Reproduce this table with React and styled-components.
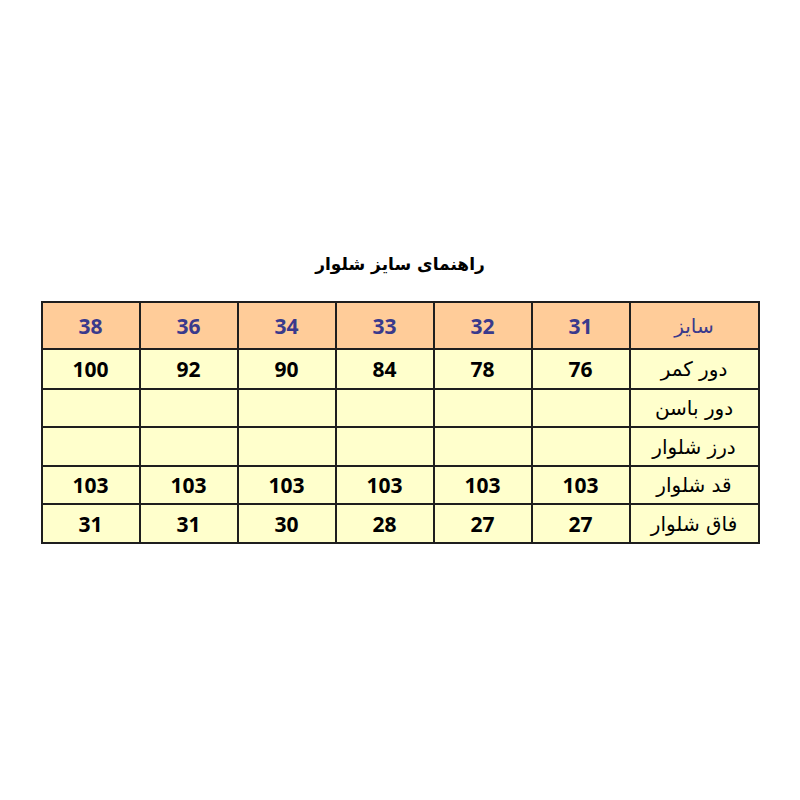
import styled, { createGlobalStyle } from "styled-components";

const Global = createGlobalStyle`
  html, body {
    margin: 0;
    background: #ffffff;
  }
`;

const Page = styled.main`
  width: 800px;
  height: 800px;
  display: flex;
  flex-direction: column;
  align-items: center;
  padding-top: 251px;
  box-sizing: border-box;
  font-family: "Open Sans", "DejaVu Sans", sans-serif;
`;

const Title = styled.h1`
  margin: 0 0 24px;
  font-size: 17px;
  font-weight: 700;
  color: #000;
  direction: rtl;
  font-family: "DejaVu Sans", sans-serif;
  line-height: 26px;
`;

const Table = styled.table`
  direction: rtl;
  border-collapse: collapse;
  table-layout: fixed;
  width: 719px;
`;

const Row = styled.tr`
  height: ${({ $h }) => $h}px;
  background: ${({ $head }) => ($head ? "#ffcc99" : "#ffffcc")};
`;

const Cell = styled.td`
  width: 96px;
  padding: 0;
  border: 2px solid #1e1e1e;
  text-align: center;
  vertical-align: middle;
  white-space: nowrap;
  font-size: 21px;
  font-weight: 700;
  color: ${({ $head }) => ($head ? "#3a3a8c" : "#000")};
`;

const Label = styled(Cell)`
  width: 127px;
  font-family: "DejaVu Sans", sans-serif;
  font-weight: 400;
  font-size: 20px;
`;

const sizes = ["31", "32", "33", "34", "36", "38"];

const rows = [
  { label: "دور کمر", values: ["76", "78", "84", "90", "92", "100"], h: 40 },
  { label: "دور باسن", values: ["", "", "", "", "", ""], h: 38 },
  { label: "درز شلوار", values: ["", "", "", "", "", ""], h: 39 },
  { label: "قد شلوار", values: ["103", "103", "103", "103", "103", "103"], h: 38 },
  { label: "فاق شلوار", values: ["27", "27", "28", "30", "31", "31"], h: 39 },
];

export default function App() {
  return (
    <>
      <Global />
      <Page>
        <Title>راهنمای سایز شلوار</Title>
        <Table>
          <tbody>
            <Row $head $h={47}>
              <Label $head>سایز</Label>
              {sizes.map((s) => (
                <Cell $head key={s}>
                  {s}
                </Cell>
              ))}
            </Row>
            {rows.map((r) => (
              <Row key={r.label} $h={r.h}>
                <Label>{r.label}</Label>
                {r.values.map((v, i) => (
                  <Cell key={i}>{v}</Cell>
                ))}
              </Row>
            ))}
          </tbody>
        </Table>
      </Page>
    </>
  );
}
